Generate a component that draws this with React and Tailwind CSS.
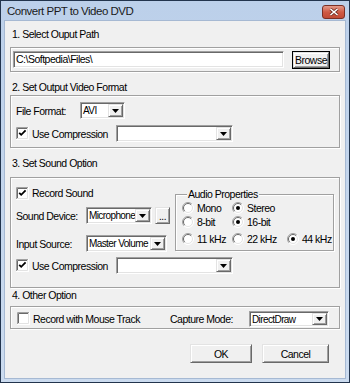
import React from "react";

const sunken = "border border-t-[#a0a0a0] border-l-[#a0a0a0] border-b-white border-r-white shadow-[inset_1px_1px_0_#696969,inset_-1px_-1px_0_#e3e3e3] p-[1px] bg-white";
const raised = "border border-t-[#e3e3e3] border-l-[#e3e3e3] border-b-[#696969] border-r-[#696969] shadow-[inset_1px_1px_0_#fff,inset_-1px_-1px_0_#a0a0a0] bg-[#f0f0f0]";
const etched = "border border-[#a0a0a0] shadow-[inset_1px_1px_0_#fff,1px_1px_0_#fff]";

const Check = ({ checked }) => (
    <svg width="13" height="13" viewBox="0 0 13 13" className="shrink-0">
        <rect x="0" y="0" width="13" height="13" fill="#fff" />
        <path d="M0.5 12 V0.5 H12" stroke="#a0a0a0" fill="none" />
        <path d="M1.5 11 V1.5 H11" stroke="#696969" fill="none" />
        <path d="M0 12.5 H12.5 V0" stroke="#fff" fill="none" />
        <path d="M1 11.5 H11.5 V1" stroke="#e3e3e3" fill="none" />
        {checked && <polyline points="3.2,5.8 5.2,7.8 9.6,3.4" stroke="#000" strokeWidth="1.8" fill="none" />}
    </svg>
);

const Radio = ({ on }) => (
    <svg width="12" height="12" viewBox="0 0 12 12" className="shrink-0">
        <circle cx="6" cy="6" r="5.5" fill="#fff" />
        <path d="M2.1 9.9 A5.5 5.5 0 0 1 9.9 2.1" stroke="#a0a0a0" fill="none" />
        <path d="M2.8 9.2 A4.5 4.5 0 0 1 9.2 2.8" stroke="#696969" fill="none" />
        <path d="M9.9 2.1 A5.5 5.5 0 0 1 2.1 9.9" stroke="#fff" fill="none" />
        <path d="M9.2 2.8 A4.5 4.5 0 0 1 2.8 9.2" stroke="#e3e3e3" fill="none" />
        {on && <circle cx="6" cy="6" r="2" fill="#000" />}
    </svg>
);

const Combo = ({ value, className }) => (
    <div className={`${sunken} flex ${className}`}>
        <span className="flex-1 pl-[1px] text-[10px] tracking-[-0.6px] leading-[13px] whitespace-nowrap overflow-hidden">{value}</span>
        <div className={`${raised} w-[15px] shrink-0 flex items-center justify-center`}>
            <svg width="7" height="4" viewBox="0 0 7 4"><polygon points="0,0 7,0 3.5,4" fill="#000" /></svg>
        </div>
    </div>
);

const CheckRow = ({ checked, label, className }) => (
    <div className={`flex items-center gap-[3px] ${className}`}>
        <Check checked={checked} />
        <span>{label}</span>
    </div>
);

const RadioItem = ({ on, label, className }) => (
    <div className={`flex items-center gap-[3px] ${className}`}>
        <Radio on={on} />
        <span>{label}</span>
    </div>
);

export default function App() {
    return (
        <div className="w-[350px] h-[383px] bg-[#22344d] p-[1px] text-[10.5px] tracking-[-0.5px] leading-[14px] whitespace-nowrap text-black font-['Liberation_Sans',Arial,sans-serif]">
            <div className="h-full flex flex-col px-[3px] pb-[3px] bg-gradient-to-b from-[#bcd0ea] to-[#cbdbef]">
                {/* title bar */}
                <div className="h-[19px] flex items-start justify-between">
                    <span className="pl-[3px] pt-[3px] text-[11.5px] leading-[14px] text-[#1a1a1a]">Convert PPT to Video DVD</span>
                    <div className="mt-[4px] mr-[1px] w-[23px] h-[14px] rounded-[3px] border border-[#7b2f24] bg-gradient-to-b from-[#e39a8a] via-[#cf5a45] to-[#c14a35] flex items-center justify-center">
                        <svg width="10" height="8" viewBox="0 0 10 8">
                            <path d="M1.5 1 L8.5 7 M8.5 1 L1.5 7" stroke="#6b2a20" strokeWidth="3" />
                            <path d="M1.5 1 L8.5 7 M8.5 1 L1.5 7" stroke="#fff" strokeWidth="1.6" />
                        </svg>
                    </div>
                </div>

                {/* client area */}
                <div className="flex-1 bg-[#f0f0f0] border border-[#a6b9d3] flex flex-col">
                    <div className="ml-[7px] mt-[6px]">1. Select Ouput Path</div>
                    <div className={`${etched} ml-[5px] mt-[6px] w-[330px] h-[25px] flex items-start pt-[3px] pl-[2px] gap-[8px]`}>
                        <div className={`${sunken} w-[271px] h-[17px] pl-[2px] leading-[13px]`}>C:\Softpedia\Files\</div>
                        <div className="border border-black w-[38px] h-[18px]">
                            <div className={`${raised} h-full flex items-center justify-center`}>Browse</div>
                        </div>
                    </div>

                    <div className="ml-[7px] mt-[8px]">2. Set Output Video Format</div>
                    <div className={`${etched} ml-[5px] mt-[1px] w-[330px] h-[53px] flex flex-col pl-[5px]`}>
                        <div className="flex items-center mt-[6px] h-[17px]">
                            <span className="w-[64px]">File Format:</span>
                            <Combo value="AVI" className="w-[45px] h-[17px]" />
                        </div>
                        <div className="flex items-center mt-[6px] h-[17px]">
                            <CheckRow checked label="Use Compression" className="w-[100px]" />
                            <Combo value="" className="w-[117px] h-[17px]" />
                        </div>
                    </div>

                    <div className="ml-[7px] mt-[8px]">3. Set Sound Option</div>
                    <div className={`${etched} ml-[5px] mt-[7px] w-[330px] h-[111px] flex flex-col pl-[5px]`}>
                        <div className="flex items-start">
                            <div className="w-[159px] flex flex-col">
                                <CheckRow checked label="Record Sound" className="mt-[8px] h-[14px]" />
                                <div className="flex items-center mt-[7px] h-[17px]">
                                    <span className="w-[70px]">Sound Device:</span>
                                    <Combo value="Microphone" className="w-[66px] h-[17px]" />
                                    <div className={`${raised} ml-[3px] w-[15px] h-[17px] flex items-end justify-center text-[10px] leading-[12px]`}>...</div>
                                </div>
                                <div className="flex items-center mt-[11px] h-[17px]">
                                    <span className="w-[70px]">Input Source:</span>
                                    <Combo value="Master Volume" className="w-[81px] h-[17px]" />
                                </div>
                            </div>
                            <fieldset className={`${etched} mt-[10px] w-[159px] h-[63px] pl-[6px]`}>
                                <legend className="ml-[5px] px-[1px] bg-[#f0f0f0] leading-[12px]">Audio Properties</legend>
                                <div className="flex flex-col">
                                    <div className="flex items-center mt-[1px] h-[14px]">
                                        <RadioItem label="Mono" className="w-[50px]" />
                                        <RadioItem on label="Stereo" />
                                    </div>
                                    <div className="flex items-center h-[14px]">
                                        <RadioItem label="8-bit" className="w-[50px]" />
                                        <RadioItem on label="16-bit" />
                                    </div>
                                    <div className="flex items-center mt-[3px] h-[14px]">
                                        <RadioItem label="11 kHz" className="w-[50px]" />
                                        <RadioItem label="22 kHz" className="w-[55px]" />
                                        <RadioItem on label="44 kHz" />
                                    </div>
                                </div>
                            </fieldset>
                        </div>
                        <div className="flex items-center mt-[5px] h-[17px]">
                            <CheckRow checked label="Use Compression" className="w-[100px]" />
                            <Combo value="" className="w-[117px] h-[17px]" />
                        </div>
                    </div>

                    <div className="ml-[7px]">4. Other Option</div>
                    <div className={`${etched} ml-[5px] mt-[4px] w-[330px] h-[23px] flex items-center pl-[6px] pt-[2px]`}>
                        <CheckRow label="Record with Mouse Track" className="w-[153px]" />
                        <span className="w-[79px]">Capture Mode:</span>
                        <Combo value="DirectDraw" className="w-[80px] h-[16px]" />
                    </div>

                    <div className="flex justify-end gap-[10px] pr-[16px] mt-[15px]">
                        <div className={`${raised} w-[62px] h-[19px] flex items-center justify-center`}>OK</div>
                        <div className={`${raised} w-[67px] h-[19px] flex items-center justify-center`}>Cancel</div>
                    </div>
                </div>
            </div>
        </div>
    );
}
